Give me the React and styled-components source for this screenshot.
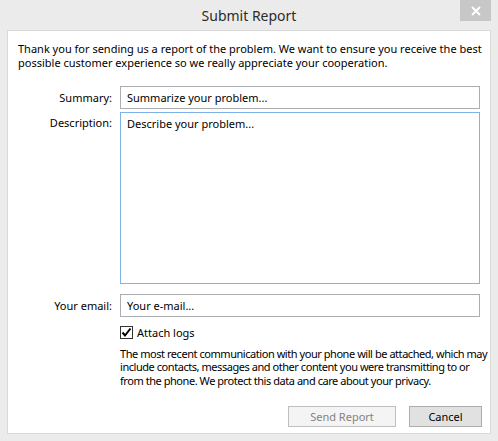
import React, { useState } from 'react';
import styled, { createGlobalStyle, css } from 'styled-components';

const GlobalStyle = createGlobalStyle`
  html, body {
    margin: 0;
    padding: 0;
    background: #ebebeb;
  }
  * {
    box-sizing: border-box;
  }
`;

const font = `"Noto Sans", "Liberation Sans", Arial, sans-serif`;

const Window = styled.div`
  width: 498px;
  height: 441px;
  background: #ebebeb;
  display: flex;
  flex-direction: column;
  font-family: ${font};
  color: #000;
`;

const TitleBar = styled.div`
  height: 30px;
  display: grid;
  grid-template-columns: 1fr auto 1fr;
  align-items: start;
`;

const Title = styled.h1`
  grid-column: 2;
  margin: 0;
  padding-top: 6px;
  font-size: 14px;
  font-weight: normal;
  color: #2b2b2b;
  line-height: 20px;
`;

const CloseButton = styled.button`
  grid-column: 3;
  justify-self: end;
  margin-right: 7px;
  width: 31px;
  height: 21px;
  border: none;
  padding: 0;
  background: #c7c7c7;
  display: flex;
  align-items: center;
  justify-content: center;
  cursor: pointer;
`;

const Panel = styled.div`
  flex: 1;
  margin: 0 7px 7px;
  background: #fff;
  border: 1px solid #dadada;
  padding: 11px 8px 6px 10px;
  display: flex;
  flex-direction: column;
`;

const Intro = styled.p`
  margin: 0;
  font-size: 11px;
  line-height: 14px;
`;

const Form = styled.div`
  margin-top: 16px;
  display: grid;
  grid-template-columns: 94px 360px;
  column-gap: 8px;
  font-size: 11px;
`;

const Label = styled.label`
  text-align: right;
  line-height: 23px;
  ${({ top }) =>
    top &&
    css`
      line-height: 16px;
      padding-top: 3px;
    `}
`;

const Field = styled.input`
  height: 23px;
  border: 1px solid #abadb3;
  padding: 0 6px;
  font-family: ${font};
  font-size: 11px;
  color: #000;
  outline: none;
  margin-bottom: ${({ gap }) => gap}px;
  &::placeholder {
    color: #000;
  }
`;

const Area = styled.textarea`
  height: 172px;
  border: 1px solid #7eb4ea;
  padding: 3px 6px;
  font-family: ${font};
  font-size: 11px;
  line-height: 16px;
  resize: none;
  outline: none;
  margin-bottom: 10px;
  &::placeholder {
    color: #000;
  }
`;

const CheckRow = styled.label`
  grid-column: 2;
  margin-top: 9px;
  display: flex;
  align-items: center;
  gap: 4px;
  line-height: 13px;
  cursor: pointer;
`;

const Box = styled.span`
  width: 13px;
  height: 13px;
  border: 1px solid #333;
  background: #fff;
  display: flex;
  align-items: center;
  justify-content: center;
`;

const Note = styled.p`
  grid-column: 2 / span 1;
  width: 372px;
  margin: 8px 0 0;
  line-height: 13.3px;
  letter-spacing: -0.45px;
`;

const Footer = styled.div`
  margin-top: auto;
  display: flex;
  justify-content: flex-end;
  gap: 13px;
`;

const Button = styled.button`
  height: 21px;
  width: ${({ wide }) => (wide ? 108 : 73)}px;
  font-family: ${font};
  font-size: 11px;
  padding: 0;
  border: 1px solid #adadad;
  background: #e1e1e1;
  color: #000;
  &:disabled {
    border-color: #bfbfbf;
    background: #f4f4f4;
    color: #838383;
  }
`;

export default function App() {
  const [attach, setAttach] = useState(true);

  return (
    <>
      <GlobalStyle />
      <Window>
        <TitleBar>
          <Title>Submit Report</Title>
          <CloseButton aria-label="Close">
            <svg width="10" height="10" viewBox="0 0 10 10">
              <path d="M1 1 L9 9 M9 1 L1 9" stroke="#fff" strokeWidth="2" />
            </svg>
          </CloseButton>
        </TitleBar>
        <Panel>
          <Intro>
            Thank you for sending us a report of the problem. We want to ensure you receive the best
            possible customer experience so we really appreciate your cooperation.
          </Intro>
          <Form>
            <Label>Summary:</Label>
            <Field placeholder="Summarize your problem..." gap={3} />
            <Label top>Description:</Label>
            <Area placeholder="Describe your problem..." />
            <Label>Your email:</Label>
            <Field placeholder="Your e-mail..." gap={0} />
            <CheckRow onClick={() => setAttach(!attach)}>
              <Box>
                {attach && (
                  <svg width="11" height="11" viewBox="0 0 11 11">
                    <path d="M1.5 5.5 L4 8.5 L9.5 1.5" fill="none" stroke="#000" strokeWidth="2" />
                  </svg>
                )}
              </Box>
              Attach logs
            </CheckRow>
            <Note>
              The most recent communication with your phone will be attached, which may include
              contacts, messages and other content you were transmitting to or from the phone. We
              protect this data and care about your privacy.
            </Note>
          </Form>
          <Footer>
            <Button wide disabled>
              Send Report
            </Button>
            <Button>Cancel</Button>
          </Footer>
        </Panel>
      </Window>
    </>
  );
}
